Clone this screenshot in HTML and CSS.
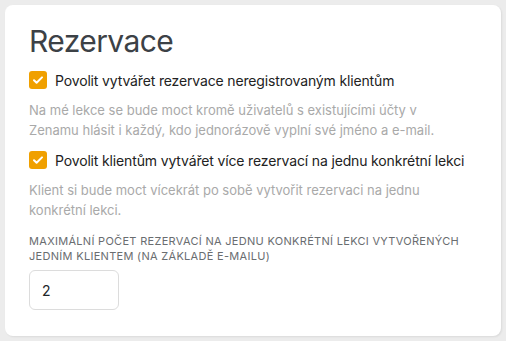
FILE: index.html
```html
<!DOCTYPE html>
<html lang="cs">
<head>
    <meta charset="UTF-8">
    <meta name="viewport" content="width=device-width, initial-scale=1.0">
    <title>Rezervace</title>
    <link rel="stylesheet" href="styles.css">
</head>
<body>
    <div class="card">
        <h1>Rezervace</h1>
        <label class="check-row">
            <span class="check-box">
                <svg viewBox="0 0 18 18" width="18" height="18"><path d="M5 9.2l2.6 2.6L13 6.4" fill="none" stroke="#fff" stroke-width="2" stroke-linecap="round" stroke-linejoin="round"/></svg>
            </span>
            <span class="check-label">Povolit vytvářet rezervace neregistrovaným klientům</span>
        </label>
        <p class="help">Na mé lekce se bude moct kromě uživatelů s existujícími účty v Zenamu hlásit i každý, kdo jednorázově vyplní své jméno a e-mail.</p>
        <label class="check-row">
            <span class="check-box">
                <svg viewBox="0 0 18 18" width="18" height="18"><path d="M5 9.2l2.6 2.6L13 6.4" fill="none" stroke="#fff" stroke-width="2" stroke-linecap="round" stroke-linejoin="round"/></svg>
            </span>
            <span class="check-label">Povolit klientům vytvářet více rezervací na jednu konkrétní lekci</span>
        </label>
        <p class="help">Klient si bude moct vícekrát po sobě vytvořit rezervaci na jednu konkrétní lekci.</p>
        <div class="field">
            <div class="field-label">Maximální počet rezervací na jednu konkrétní lekci vytvořených jedním klientem (na základě e-mailu)</div>
            <input class="field-input" type="text" value="2">
        </div>
    </div>
</body>
</html>
```

FILE: styles.css
```css
body {
    margin: 0;
    padding: 5px;
    background-color: #ececec;
    font-family: Inter, "Open Sans", sans-serif;
}
.card {
    box-sizing: border-box;
    width: 496px;
    height: 331px;
    background-color: #fff;
    border-radius: 8px;
    box-shadow: 1px 1px 2px rgba(0, 0, 0, 0.08);
    padding: 16px 24px 0 24px;
}
h1 {
    margin: 0;
    font-size: 30px;
    font-weight: 400;
    line-height: 40px;
    letter-spacing: -0.6px;
    color: #3c4146;
}
.check-row {
    display: flex;
    align-items: center;
    gap: 8px;
    margin-top: 10px;
}
.check-row + .help + .check-row {
    margin-top: 11px;
}
.check-box {
    width: 18px;
    height: 18px;
    border-radius: 3px;
    background-color: #f0a000;
    display: flex;
    flex-shrink: 0;
}
.check-label {
    font-size: 14px;
    letter-spacing: -0.15px;
    color: #222;
}
.help {
    margin: 11px 0 0 0;
    padding-right: 12px;
    font-size: 13px;
    line-height: 20px;
    color: #a9a9a9;
}
.field {
    margin-top: 14px;
}
.field-label {
    font-size: 11px;
    line-height: 15px;
    text-transform: uppercase;
    letter-spacing: 0.3px;
    color: #6a6d70;
}
.field-input {
    display: block;
    box-sizing: border-box;
    width: 90px;
    height: 40px;
    margin-top: 6px;
    padding: 0 12px;
    border: 1px solid #dcdcdc;
    border-radius: 6px;
    font-family: inherit;
    font-size: 14px;
    color: #212529;
    outline: none;
}
```
